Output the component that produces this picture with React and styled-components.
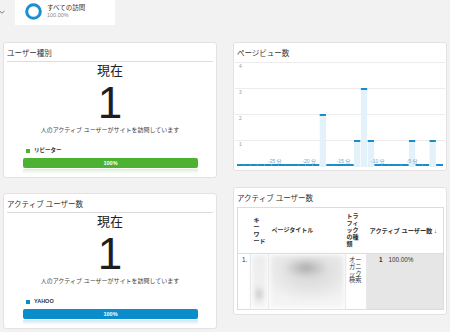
import React from "react";
import styled, { createGlobalStyle } from "styled-components";

const GlobalStyle = createGlobalStyle`
  * { box-sizing: border-box; }
  html, body { margin: 0; padding: 0; }
  body {
    width: 450px;
    height: 332px;
    overflow: hidden;
    background: #f2f2f2;
    font-family: "Liberation Sans", "Noto Sans CJK JP", sans-serif;
    color: #333;
  }
`;

const GREEN = "#4db131";
const BLUE = "#0b8ccb";

const Page = styled.div`
  width: 450px;
`;

const TopBar = styled.div`
  height: 42px;
  display: flex;
  align-items: flex-start;
`;

const Chevron = styled.svg`
  width: 6px;
  height: 6px;
  margin: 9px 0 0 -1px;
`;

const SegmentTab = styled.div`
  margin-left: 10px;
  width: 100px;
  height: 25px;
  background: #fff;
  display: flex;
  align-items: flex-start;
  gap: 5px;
  padding: 3px 0 0 10px;
`;

const SegmentText = styled.div`
  display: flex;
  flex-direction: column;
`;

const SegmentName = styled.span`
  font-size: 6.5px;
  line-height: 9px;
  color: #333;
`;

const SegmentValue = styled.span`
  font-size: 5.5px;
  line-height: 7px;
  color: #888;
`;

const Grid = styled.div`
  display: flex;
  gap: 16px;
  padding: 0 3px;
`;

const Column = styled.div`
  width: 214px;
  display: flex;
  flex-direction: column;
  gap: ${(p) => p.$gap}px;
`;

const Card = styled.div`
  background: #fff;
  border: 1px solid #e2e2e2;
  border-radius: 3px;
  padding: 0 3px ${(p) => p.$pb || 0}px;
`;

const CardTitle = styled.div`
  height: 19px;
  display: flex;
  align-items: center;
  font-size: 7.5px;
  color: #333;
  border-bottom: ${(p) => (p.$plain ? "none" : "1px solid #dcdcdc")};
`;

const NowLabel = styled.div`
  margin-top: 1px;
  text-align: center;
  font-size: 13px;
  line-height: 16px;
  color: #222;
`;

const BigNumber = styled.div`
  margin-top: 2px;
  text-align: center;
  font-family: "Liberation Sans", Arial, sans-serif;
  font-size: 44px;
  line-height: 44px;
  color: #1e1e1e;
`;

const Sub = styled.div`
  margin-top: 1px;
  text-align: center;
  font-size: 6px;
  line-height: 9px;
  color: #444;
`;

const Legend = styled.div`
  margin-top: 11px;
  padding-left: 19px;
  display: flex;
  align-items: center;
  gap: 4px;
  font-size: 5.5px;
  font-weight: bold;
  line-height: 9px;
  color: #333;

  &::before {
    content: "";
    width: 4px;
    height: 4px;
    background: ${(p) => p.$color};
  }
`;

const Bar = styled.div`
  margin: 3px 15px 0 16px;
  height: 10px;
  border-radius: 2px;
  background: ${(p) => p.$color};
  color: #fff;
  font-size: 5.5px;
  font-weight: bold;
  line-height: 10px;
  text-align: center;
`;

const Reflection = styled.div`
  margin: 1px 15px 0 16px;
  height: 5px;
  background: linear-gradient(${(p) => p.$color}33, #ffffff00);
`;

const ChartSvg = styled.svg`
  display: block;
  width: 206px;
  height: 108px;
  overflow: visible;
`;

const Table = styled.table`
  width: 206px;
  table-layout: fixed;
  border-collapse: collapse;
  border: 1px solid #dcdcdc;
`;

const Th = styled.th`
  height: 46px;
  padding: 0 ${(p) => (p.$tight ? 1 : 3)}px;
  font-size: ${(p) => p.$size || 6}px;
  line-height: 7px;
  font-weight: bold;
  text-align: left;
  vertical-align: middle;
  color: #333;
  border-bottom: 1px solid #dcdcdc;
  white-space: nowrap;
  overflow: visible;
`;

const Td = styled.td`
  height: 55px;
  padding: ${(p) => (p.$flush ? "1px 1px" : "3px 3px 0")};
  font-size: 6.3px;
  line-height: 6.8px;
  font-weight: ${(p) => (p.$bold ? "bold" : "normal")};
  text-align: ${(p) => p.$align || "left"};
  vertical-align: top;
  color: #333;
  white-space: nowrap;
  background: ${(p) => (p.$shade ? "#e6e6e6" : "#fff")};
  border-left: ${(p) => (p.$noSep ? "none" : "1px solid #e8e8e8")};
`;

const Blur = styled.div`
  width: 100%;
  height: 53px;
  filter: blur(2.5px);
  background: ${(p) => p.$bg};
`;

const bars = Array.from({ length: 30 }, () => 0);
bars[12] = 2;
bars[17] = 1;
bars[18] = 3;
bars[19] = 1;
bars[25] = 1;
bars[28] = 1;

const BAR_W = 206 / 30;
const ZERO_Y = 104;
const UNIT = 26;

const PageViewChart = () => (
  <ChartSvg viewBox="0 0 206 108">
    {[4, 3, 2, 1].map((v) => (
      <g key={v}>
        <line x1={-2} x2={208} y1={ZERO_Y - v * UNIT + 0.5} y2={ZERO_Y - v * UNIT + 0.5} stroke="#ececec" strokeWidth="1" />
        <text x={2} y={ZERO_Y - v * UNIT + 6} fontSize="5" fill="#9a9a9a" fontFamily="Liberation Sans">
          {v}
        </text>
      </g>
    ))}
    {bars.map((v, i) => {
      const x = i * BAR_W;
      if (v === 0) {
        return <rect key={i} x={x} y={ZERO_Y - 2} width={BAR_W} height={2} fill="#1a8ccc" />;
      }
      const top = ZERO_Y - v * UNIT;
      return (
        <g key={i}>
          <rect x={x + 0.3} y={top} width={BAR_W - 0.6} height={ZERO_Y + 1 - top} fill="#e3f1f8" />
          <rect x={x + 0.3} y={top} width={BAR_W - 0.6} height={2} fill="#1a8ccc" />
        </g>
      );
    })}
    {[25, 20, 15, 10, 5].map((m) => {
      const idx = 30 - m;
      return (
        <text
          key={m}
          x={idx * BAR_W + BAR_W / 2}
          y={101}
          fontSize="5"
          textAnchor="middle"
          fill="#6fa6cc"
          fontFamily="Liberation Sans, Noto Sans CJK JP"
        >
          -{m} 分
        </text>
      );
    })}
  </ChartSvg>
);

const ActiveCard = ({ title, legend, color }) => (
  <Card $pb={3}>
    <CardTitle>{title}</CardTitle>
    <NowLabel>現在</NowLabel>
    <BigNumber>1</BigNumber>
    <Sub>人のアクティブ ユーザーがサイトを訪問しています</Sub>
    <Legend $color={color}>{legend}</Legend>
    <Bar $color={color}>100%</Bar>
    <Reflection $color={color} />
  </Card>
);

const App = () => (
  <Page>
    <GlobalStyle />
    <TopBar>
      <Chevron viewBox="0 0 6 6">
        <polyline points="0.5,1.8 3,4.3 5.5,1.8" fill="none" stroke="#777" strokeWidth="1" />
      </Chevron>
      <SegmentTab>
        <svg width="17" height="17" viewBox="0 0 17 17">
          <circle cx="8.5" cy="8.5" r="6.8" fill="none" stroke="#1b8fd2" strokeWidth="3" />
        </svg>
        <SegmentText>
          <SegmentName>すべての訪問</SegmentName>
          <SegmentValue>100.00%</SegmentValue>
        </SegmentText>
      </SegmentTab>
    </TopBar>

    <Grid>
      <Column $gap={15}>
        <ActiveCard title="ユーザー種別" legend="リピーター" color={GREEN} />
        <ActiveCard title="アクティブ ユーザー数" legend="YAHOO" color={BLUE} />
      </Column>

      <Column $gap={16}>
        <Card>
          <CardTitle $plain>ページビュー数</CardTitle>
          <PageViewChart />
        </Card>

        <Card $pb={4}>
          <CardTitle $plain>アクティブ ユーザー数</CardTitle>
          <Table>
            <colgroup>
              <col style={{ width: 13 }} />
              <col style={{ width: 18 }} />
              <col style={{ width: 77 }} />
              <col style={{ width: 21 }} />
              <col style={{ width: 18 }} />
              <col style={{ width: 59 }} />
            </colgroup>
            <thead>
              <tr>
                <Th />
                <Th>
                  キ<br />ー<br />ワ<br />ード
                </Th>
                <Th>ページタイトル</Th>
                <Th $tight>
                  トラ<br />フィ<br />ック<br />の種<br />類
                </Th>
                <Th colSpan={2} $size={6.2}>
                  アクティブ ユーザー数 ↓
                </Th>
              </tr>
            </thead>
            <tbody>
              <tr>
                <Td $noSep style={{ paddingLeft: 4 }}>1.</Td>
                <Td $flush>
                  <Blur $bg="radial-gradient(ellipse 5px 9px at 7px 39px, #bdbdbd, #e2e2e200), linear-gradient(#ececec, #f3f3f3)" />
                </Td>
                <Td $flush>
                  <Blur $bg="radial-gradient(ellipse 22px 10px at 36px 13px, #a9a9a9, #c9c9c9 55%, #e6e6e600), radial-gradient(ellipse 45px 30px at 40px 18px, #d6d6d6, #eeeeee00), linear-gradient(#ebebeb, #f5f5f5)" />
                </Td>
                <Td style={{ paddingLeft: 3 }}>
                  オー<br />ガニ<br />ック<br />検索
                </Td>
                <Td $shade $bold $align="right" style={{ paddingRight: 2 }}>
                  1
                </Td>
                <Td $shade $noSep style={{ paddingLeft: 4 }}>
                  100.00%
                </Td>
              </tr>
            </tbody>
          </Table>
        </Card>
      </Column>
    </Grid>
  </Page>
);

export default App;
